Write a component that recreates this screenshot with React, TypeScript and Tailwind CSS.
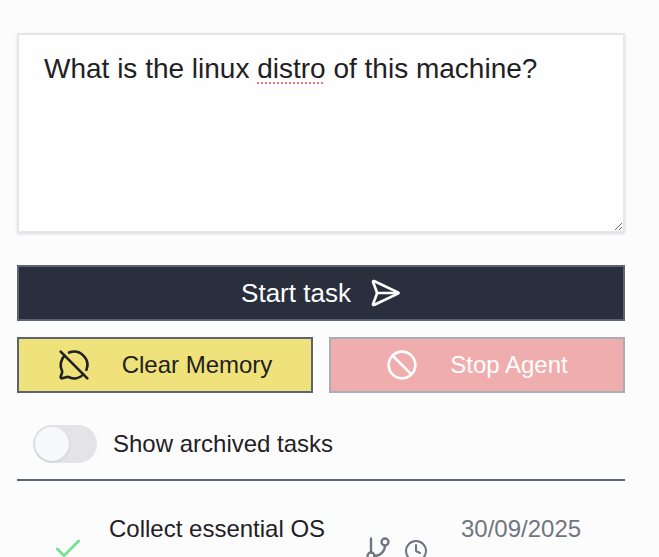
import React from 'react';
import { Ban, Check, Clock, GitBranch, MessageCircleOff, SendHorizontal } from 'lucide-react';

const App = () => {
  return (
    <div className="h-[557px] w-[659px] overflow-hidden bg-[#fdfcfd] px-[17px] pt-[33px] font-['Liberation_Sans',Arial,sans-serif] text-[#1f2124]">
      <div className="h-[200px] w-[608px] resize overflow-auto border-2 border-[#e5e5ea] bg-[#fefefe] px-[25px] py-[16px] text-[28px] leading-[36px] shadow-sm">
        What is the linux{' '}
        <span className="underline decoration-[#f87171] decoration-dotted decoration-2 underline-offset-4">distro</span>{' '}
        of this machine?
      </div>

      <button className="mt-8 flex h-14 w-[608px] items-center justify-center gap-[18px] border-2 border-[#5b6472] bg-[#2a2f3d] text-[26px] text-white">
        Start task
        <SendHorizontal size={32} strokeWidth={2} />
      </button>

      <div className="mt-4 flex w-[608px] gap-4">
        <button className="flex h-14 flex-1 items-center justify-center gap-[32px] border-2 border-[#5b6472] bg-[#f0e27a] text-[24px]">
          <MessageCircleOff size={32} strokeWidth={2} />
          Clear Memory
        </button>
        <button className="flex h-14 flex-1 items-center justify-center gap-[32px] border-2 border-[#a9adb6] bg-[#f0adad] text-[24px] text-white">
          <Ban size={32} strokeWidth={2} />
          Stop Agent
        </button>
      </div>

      <div className="mt-8 flex items-center gap-4 pl-4">
        <div className="h-[38px] w-16 rounded-full bg-[#e4e4e7] p-0.5">
          <div className="h-[34px] w-[34px] rounded-full bg-[#f8f9fc] shadow" />
        </div>
        <span className="text-[24px]">Show archived tasks</span>
      </div>

      <div className="mt-4 w-[608px] border-t-2 border-[#5b6472]" />

      <div className="mt-[30px] flex w-[608px]">
        <div className="flex w-[92px] justify-center pl-[10px] pt-[22px]">
          <Check size={32} strokeWidth={2} className="text-[#6ee38d]" />
        </div>
        <div className="w-[255px] text-[24px] leading-[36px]">Collect essential OS</div>
        <div className="flex gap-[12px] pt-[24px] text-[#71757f]">
          <GitBranch size={28} strokeWidth={2} />
          <Clock size={24} strokeWidth={2} className="mt-1" />
        </div>
        <div className="pl-[33px] text-[24px] leading-[36px] text-[#71757f]">30/09/2025</div>
      </div>
    </div>
  );
};

export default App;
